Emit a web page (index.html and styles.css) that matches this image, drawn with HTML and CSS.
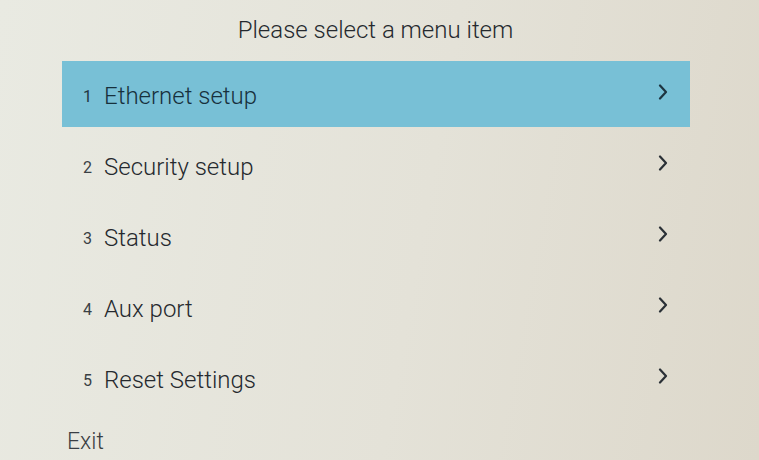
FILE: index.html
```html
<!DOCTYPE html>
<html>
<head>
<meta charset="utf-8">
<link rel="stylesheet" href="styles.css">
</head>
<body>
<div class="screen">
  <div class="title">Please select a menu item</div>
  <ul class="menu">
    <li class="item active"><span class="num">1</span><span class="label">Ethernet setup</span><svg class="chev" viewBox="0 0 10 16" width="10" height="16"><path d="M2 1.5 L8 8 L2 14.5" fill="none" stroke="currentColor" stroke-width="2.2" stroke-linecap="round" stroke-linejoin="round"/></svg></li>
    <li class="item"><span class="num">2</span><span class="label">Security setup</span><svg class="chev" viewBox="0 0 10 16" width="10" height="16"><path d="M2 1.5 L8 8 L2 14.5" fill="none" stroke="currentColor" stroke-width="2.2" stroke-linecap="round" stroke-linejoin="round"/></svg></li>
    <li class="item"><span class="num">3</span><span class="label">Status</span><svg class="chev" viewBox="0 0 10 16" width="10" height="16"><path d="M2 1.5 L8 8 L2 14.5" fill="none" stroke="currentColor" stroke-width="2.2" stroke-linecap="round" stroke-linejoin="round"/></svg></li>
    <li class="item"><span class="num">4</span><span class="label">Aux port</span><svg class="chev" viewBox="0 0 10 16" width="10" height="16"><path d="M2 1.5 L8 8 L2 14.5" fill="none" stroke="currentColor" stroke-width="2.2" stroke-linecap="round" stroke-linejoin="round"/></svg></li>
    <li class="item"><span class="num">5</span><span class="label">Reset Settings</span><svg class="chev" viewBox="0 0 10 16" width="10" height="16"><path d="M2 1.5 L8 8 L2 14.5" fill="none" stroke="currentColor" stroke-width="2.2" stroke-linecap="round" stroke-linejoin="round"/></svg></li>
  </ul>
  <div class="exit">Exit</div>
</div>
</body>
</html>
```
FILE: styles.css
```css
html, body {
  margin: 0;
  padding: 0;
}
body {
  width: 759px;
  height: 460px;
  overflow: hidden;
  background: linear-gradient(100deg, #e9eae2 0%, #e4e2d8 55%, #ddd8cb 100%);
  font-family: Roboto, "Liberation Sans", sans-serif;
  font-weight: 300;
  color: #25292e;
}
.screen {
  display: flex;
  flex-direction: column;
  height: 460px;
}
.title {
  text-align: center;
  font-size: 24px;
  line-height: 28px;
  padding-top: 16px;
  padding-right: 8px;
  height: 44px;
  box-sizing: border-box;
  margin-bottom: 17px;
}
.menu {
  list-style: none;
  margin: 0 0 0 62px;
  padding: 0;
  width: 628px;
  display: flex;
  flex-direction: column;
  gap: 5px;
}
.item {
  height: 66px;
  display: flex;
  align-items: center;
  padding: 0 22px 0 21px;
}
.item.active {
  background: #78c0d6;
  color: #17303c;
}
.num {
  font-size: 16px;
  font-weight: 400;
  width: 21px;
  padding-top: 4px;
  color: #3a3f44;
}
.item.active .num {
  color: #1f3642;
}
.label {
  flex: 1;
  font-size: 24px;
  padding-top: 4px;
}
.chev {
  display: block;
  color: #2a3036;
  margin-top: -4px;
}
.item.active .chev {
  color: #1d3440;
}
.exit {
  margin-top: 18px;
  padding-left: 67px;
  font-size: 23px;
  line-height: 26px;
  color: #3a3e43;
}
```
